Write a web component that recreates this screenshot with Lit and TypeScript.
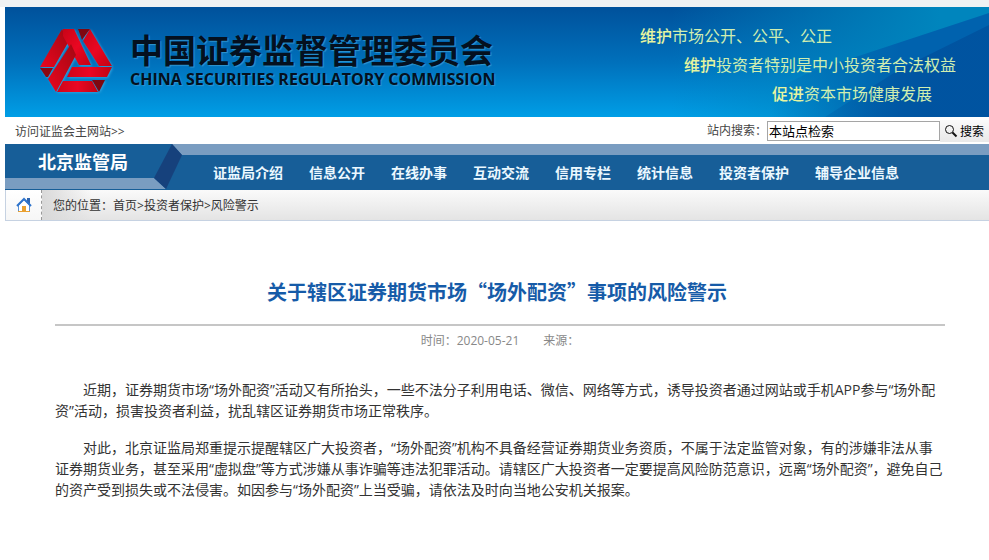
import { LitElement, html, css } from "lit";
import { customElement, property } from "lit/decorators.js";

const NAV_ITEMS = ["证监局介绍", "信息公开", "在线办事", "互动交流", "信用专栏", "统计信息", "投资者保护", "辅导企业信息"];

@customElement("site-banner")
class SiteBanner extends LitElement {
  static styles = css`
    :host {
      display: grid;
      height: 110px;
      overflow: hidden;
      background: linear-gradient(#00519b, #0070bb 50%, #009ee6);
    }
    .rays, .content { grid-area: 1 / 1; }
    .rays { justify-self: end; width: 489px; height: 110px; display: block; }
    .content {
      display: flex;
      justify-content: space-between;
      padding-left: 34px;
      padding-right: 33px;
    }
    .brand { display: flex; gap: 17px; }
    .mark { width: 74px; height: 66px; margin-top: 21px; flex: none; filter: drop-shadow(1px 1px 1px #2fa0dc); }
    .names { padding-top: 24px; white-space: nowrap; color: #04101f; text-shadow: 1px 1px 1px #2f96d0; }
    h1 { margin: 0; font-size: 33px; line-height: 40px; font-weight: 700; }
    .english { margin: 0; font: 700 16px/16px "Open Sans", sans-serif; }
    .slogans { padding-top: 15px; white-space: nowrap; color: #d0eeb0; font-size: 16px; line-height: 29px; }
    .slogans p { margin: 0; }
    .second { padding-left: 44px; }
    .third { padding-left: 132px; }
    b { font-weight: 500; color: #e6f5a0; }
  `;
  render() {
    return html`
      <svg class="rays" viewBox="0 0 489 110" preserveAspectRatio="none" aria-hidden="true">
        <defs>
          <linearGradient id="top" x1="0" y1="0" x2="1" y2="0">
            <stop offset="0.35" stop-color="#0085bd" stop-opacity="0" />
            <stop offset="0.9" stop-color="#0085bd" />
          </linearGradient>
          <linearGradient id="low" gradientUnits="userSpaceOnUse" x1="270" y1="0" x2="489" y2="0">
            <stop offset="0" stop-color="#0062ae" stop-opacity="0" />
            <stop offset="0.6" stop-color="#0062ae" />
          </linearGradient>
          <linearGradient id="deep" gradientUnits="userSpaceOnUse" x1="325" y1="0" x2="430" y2="0">
            <stop offset="0" stop-color="#00509d" stop-opacity="0.2" />
            <stop offset="1" stop-color="#00509d" stop-opacity="0.8" />
          </linearGradient>
        </defs>
        <path fill="url(#top)" d="M0 0H489V110H0z" />
        <path fill="url(#low)" d="M220 110L310 65L489 6V110z" />
        <path fill="url(#deep)" d="M489 18L400 62L325 110H489z" />
      </svg>
      <div class="content">
        <div class="brand">
          <svg class="mark" viewBox="0 0 74 66" aria-hidden="true">
            <defs>
              <linearGradient id="a" x1="0" y1="1" x2="1" y2="0"><stop stop-color="#ea061f" /><stop offset="1" stop-color="#a30812" /></linearGradient>
              <linearGradient id="b" x1="0" y1="0" x2="1" y2="1"><stop stop-color="#c80417" /><stop offset="0.5" stop-color="#ea0722" /><stop offset="1" stop-color="#c30213" /></linearGradient>
              <linearGradient id="c" x1="0" y1="0" x2="1" y2="0"><stop stop-color="#ce0518" /><stop offset="0.5" stop-color="#ea0723" /><stop offset="1" stop-color="#c00413" /></linearGradient>
            </defs>
            <path fill="url(#a)" d="M23 1L30 13L15 39H1z" />
            <path fill="#8c0812" d="M1 40H14L9 49H7z" />
            <path fill="url(#b)" d="M24 1H35L52 37H40L24 8z" />
            <path fill="#7e0710" d="M39 1H51L43 12z" />
            <path fill="url(#b)" d="M51 1L73 38H60L44 13z" />
            <path fill="url(#c)" d="M33 39H73L68 49H28z" />
            <path fill="url(#a)" d="M32 16L37 27L17 64L9 51z" />
            <path fill="url(#c)" d="M24 53H53L59 64H18z" />
            <path fill="#7e0710" d="M53 52H66L60 64z" />
          </svg>
          <div class="names">
            <h1>中国证券监督管理委员会</h1>
            <p class="english">CHINA SECURITIES REGULATORY COMMISSION</p>
          </div>
        </div>
        <div class="slogans">
          <p><b>维护</b>市场公开、公平、公正</p>
          <p class="second"><b>维护</b>投资者特别是中小投资者合法权益</p>
          <p class="third"><b>促进</b>资本市场健康发展</p>
        </div>
      </div>
    `;
  }
}

@customElement("site-tools")
class SiteTools extends LitElement {
  static styles = css`
    :host { display: flex; justify-content: space-between; align-items: center; height: 27px; padding-left: 10px; font-size: 12px; color: #444; }
    a { color: inherit; text-decoration: none; }
    form { display: flex; align-items: center; }
    label { line-height: 20px; }
    input {
      box-sizing: border-box; width: 173px; height: 20px; padding: 0 1px;
      border: 1px solid #a5a5a5; border-radius: 0; background: #fff; color: #000;
      font-family: inherit; font-size: 13px;
    }
    button {
      display: flex; align-items: center; gap: 2px; height: 22px; width: 49px; padding: 0 4px;
      border: 0; background: linear-gradient(#fafafa, #e9e9e9); color: #000;
      font-family: inherit; font-size: 12px; white-space: nowrap;
    }
    svg { width: 14px; height: 14px; flex: none; }
  `;
  render() {
    return html`
      <a href="#">访问证监会主网站&gt;&gt;</a>
      <form @submit=${(e: Event) => e.preventDefault()}>
        <label for="q">站内搜索：</label>
        <input id="q" type="text" value="本站点检索" />
        <button type="submit">
          <svg viewBox="0 0 14 14" fill="none" stroke="#111" aria-hidden="true">
            <circle cx="5.500" cy="5.500" r="4" />
            <path d="M8.500 8.500L12.500 12.500" stroke-width="2" />
          </svg>
          搜索
        </button>
      </form>
    `;
  }
}

@customElement("site-nav")
class SiteNav extends LitElement {
  @property({ attribute: false }) items: string[] = [];
  static styles = css`
    :host { display: flex; height: 46px; background: linear-gradient(#7a9dc1 11px, #175e98 11px); }
    .bureau { display: grid; width: 182px; flex: none; }
    .bureau svg, .bureau strong { grid-area: 1 / 1; }
    .bureau svg { display: block; width: 182px; height: 46px; }
    .bureau strong { padding-left: 33px; font-size: 18px; line-height: 36px; color: #fff; }
    nav { display: flex; gap: 26px; padding: 11px 0 0 26px; white-space: nowrap; }
    a { color: #ebf8ff; font-size: 14px; font-weight: 700; line-height: 36px; text-decoration: none; }
  `;
  render() {
    return html`
      <div class="bureau">
        <svg viewBox="0 0 182 46" aria-hidden="true">
          <path fill="#175e98" d="M0 0H167L177 11L161 46H0z" />
          <path fill="#7a9dc1" d="M0 34H149L161 45H0z" />
          <path fill="#16417c" d="M167 0L177 11L161 45L149 34z" />
        </svg>
        <strong>北京监管局</strong>
      </div>
      <nav>${this.items.map((t) => html`<a href="#">${t}</a>`)}</nav>
    `;
  }
}

@customElement("bread-crumb")
class BreadCrumb extends LitElement {
  static styles = css`
    :host { display: flex; height: 30px; border-bottom: 1px solid #c6d2e2; font-size: 12px; line-height: 32px; color: #333; }
    .home { display: flex; align-items: center; justify-content: center; box-sizing: border-box; width: 37px; border-left: 1px solid #c6d2e2; border-right: 1px dashed #999; background: linear-gradient(#fff, #f6f6f6); }
    .home svg { width: 16px; height: 16px; }
    .trail { flex: 1; padding-left: 11px; background: linear-gradient(90deg, #d9d9d9, transparent 50px), linear-gradient(#fafafa, #e4e4e4); }
    a { color: inherit; text-decoration: none; }
  `;
  render() {
    return html`
      <a class="home" href="#" aria-label="首页">
        <svg viewBox="0 0 16 16" aria-hidden="true">
          <path fill="#2f66b0" d="M11 1h3v6h-3z" />
          <path fill="#fff" stroke="#5a90d4" d="M2.500 8V14.500H13.500V8L8 2.500z" />
          <path fill="none" stroke="#2f74cc" stroke-width="2" d="M1 9L8 2L15 9" />
          <path fill="#e9a030" d="M2 14h12v1H2zM6 9h4v6H6z" />
        </svg>
      </a>
      <div class="trail">您的位置：<a href="#">首页</a>&gt;<a href="#">投资者保护</a>&gt;<a href="#">风险警示</a></div>
    `;
  }
}

@customElement("notice-article")
class NoticeArticle extends LitElement {
  static styles = css`
    :host { display: block; padding-top: 56px; }
    h2 { margin: 0; text-align: center; font-size: 20px; line-height: 30px; font-weight: 700; color: #165ba8; font-family: "Noto Sans CJK SC", sans-serif; }
    .meta { display: flex; justify-content: center; gap: 24px; padding: 1px 44px 0 50px; font-size: 12px; line-height: 28px; color: #888; }
    hr { margin: 17px 44px 0 50px; border: 0; border-top: 2px solid #c6c6c6; }
    .body { padding: 24px 44px 0 50px; font-size: 14px; line-height: 21px; color: #333; }
    .body p { margin: 0 0 16px; text-indent: 2em; }
  `;
  render() {
    return html`
      <h2>关于辖区证券期货市场“场外配资”事项的风险警示</h2>
      <hr />
      <div class="meta"><span>时间：2020-05-21</span><span>来源：</span></div>
      <div class="body">
        <p>近期，证券期货市场“场外配资”活动又有所抬头，一些不法分子利用电话、微信、网络等方式，诱导投资者通过网站或手机APP参与“场外配资”活动，损害投资者利益，扰乱辖区证券期货市场正常秩序。</p>
        <p>对此，北京证监局郑重提示提醒辖区广大投资者，“场外配资”机构不具备经营证券期货业务资质，不属于法定监管对象，有的涉嫌非法从事证券期货业务，甚至采用“虚拟盘”等方式涉嫌从事诈骗等违法犯罪活动。请辖区广大投资者一定要提高风险防范意识，远离“场外配资”，避免自己的资产受到损失或不法侵害。如因参与“场外配资”上当受骗，请依法及时向当地公安机关报案。</p>
      </div>
    `;
  }
}

@customElement("app-root")
class AppRoot extends LitElement {
  static styles = css`
    :host { display: block; min-height: 100vh; background: #fff; font-family: "Open Sans", "Noto Sans CJK SC", sans-serif; }
    .strip { height: 7px; background: #f0f2f3; }
    main { margin-left: 5px; }
  `;
  render() {
    return html`
      <div class="strip"></div>
      <main>
        <site-banner></site-banner>
        <site-tools></site-tools>
        <site-nav .items=${NAV_ITEMS}></site-nav>
        <bread-crumb></bread-crumb>
        <notice-article></notice-article>
      </main>
    `;
  }
}
